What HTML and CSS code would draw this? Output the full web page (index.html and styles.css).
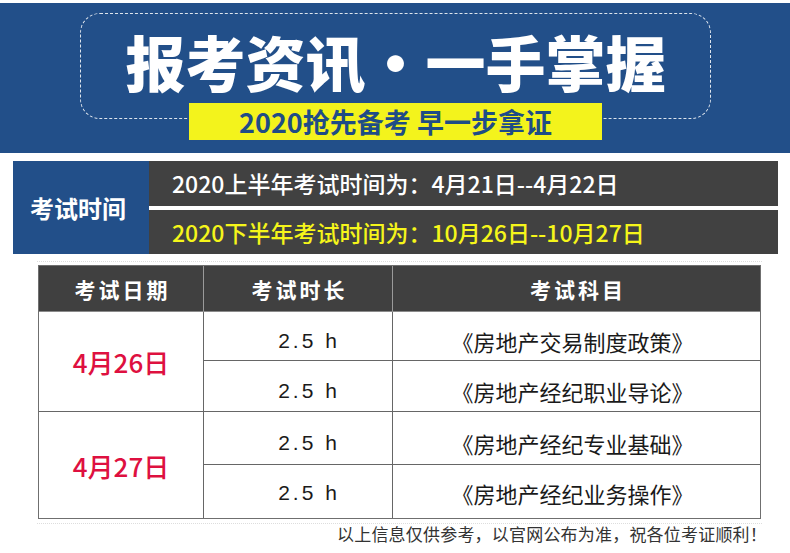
FILE: index.html
```html
<!DOCTYPE html>
<html lang="zh-CN">
<head>
<meta charset="utf-8">
<title>报考资讯</title>
<link rel="stylesheet" href="styles.css">
</head>
<body>
<div class="page">
  <header class="banner">
    <div class="frame">
      <h1 class="title">报考资讯<span class="dot">·</span>一手掌握</h1>
    </div>
    <div class="tag">2020抢先备考 早一步拿证</div>
  </header>

  <section class="times">
    <div class="times-label">考试时间</div>
    <div class="times-rows">
      <div class="times-row first">2020上半年考试时间为：4月21日--4月22日</div>
      <div class="times-row second">2020下半年考试时间为：10月26日--10月27日</div>
    </div>
  </section>

  <div class="table-wrap">
    <div class="grid">
      <div class="th">考试日期</div>
      <div class="th">考试时长</div>
      <div class="th last">考试科目</div>

      <div class="date r1">4月26日</div>
      <div class="td dur r1a">2.5 h</div>
      <div class="td subj r1a">《房地产交易制度政策》</div>
      <div class="td dur r1b">2.5 h</div>
      <div class="td subj r1b">《房地产经纪职业导论》</div>

      <div class="date r2">4月27日</div>
      <div class="td dur r2a">2.5 h</div>
      <div class="td subj r2a">《房地产经纪专业基础》</div>
      <div class="td dur r2b end">2.5 h</div>
      <div class="td subj r2b end">《房地产经纪业务操作》</div>
    </div>
  </div>

  <p class="note">以上信息仅供参考，以官网公布为准，祝各位考证顺利！</p>
</div>
</body>
</html>
```

FILE: styles.css
```css
* { box-sizing: border-box; }
html, body { margin: 0; padding: 0; background: #ffffff; }
body {
  width: 790px;
  height: 553px;
  overflow: hidden;
  font-family: "Noto Sans CJK SC", "Noto Sans", sans-serif;
}
.page { padding-top: 3px; }

/* banner */
.banner {
  height: 150px;
  background: #224f89;
  padding-top: 10px;
}
.frame {
  margin-left: 80px;
  width: 631px;
  height: 106px;
  border: 1px dashed rgba(255, 255, 255, 0.85);
  border-radius: 20px;
  padding-top: 17px;
}
.title {
  margin: 0;
  text-align: center;
  color: #ffffff;
  font-size: 60px;
  line-height: 60px;
  font-weight: 900;
  white-space: nowrap;
}
.dot {
  display: inline-block;
  width: 60px;
  text-align: center;
}
.tag {
  margin-top: -16px;
  margin-left: 189px;
  width: 413px;
  height: 37px;
  background: #f3f31c;
  color: #1f4c86;
  font-size: 27px;
  font-weight: 700;
  line-height: 37px;
  text-align: center;
  white-space: nowrap;
}

/* exam times */
.times {
  display: flex;
  margin: 8px 0 0 13px;
  width: 765px;
  height: 93px;
}
.times-label {
  width: 136px;
  background: #224f89;
  color: #ffffff;
  font-size: 24px;
  font-weight: 700;
  display: flex;
  align-items: center;
  justify-content: center;
  padding-right: 6px;
}
.times-rows {
  flex: 1;
  display: flex;
  flex-direction: column;
  gap: 4px;
}
.times-row {
  flex: 1;
  background: #414141;
  padding-left: 23px;
  font-size: 23px;
  font-weight: 500;
  display: flex;
  align-items: center;
  white-space: nowrap;
}
.times-row.first { color: #ffffff; }
.times-row.second { color: #f5f51a; }

/* table */
.table-wrap {
  margin: 7px 0 0 37px;
  width: 725px;
  border-top: 1px dotted #dddddd;
  border-bottom: 1px dotted #dddddd;
  padding: 3px 1px 4px 1px;
}
.grid {
  display: grid;
  grid-template-columns: 165px 189px 1fr;
  grid-template-rows: 46px 49px 51px 53px 53px;
  border: 1px solid #6f6f6f;
}
.th {
  background: #404040;
  color: #ffffff;
  font-size: 21px;
  font-weight: 700;
  letter-spacing: 3px;
  padding-left: 3px;
  display: flex;
  align-items: center;
  justify-content: center;
  border-right: 1px solid #9a9a9a;
  border-bottom: 1px solid #8a8a8a;
}
.th.last { border-right: none; }
.date {
  grid-column: 1;
  color: #de1040;
  font-size: 26px;
  font-weight: 500;
  display: flex;
  align-items: center;
  justify-content: center;
  border-right: 1px solid #666666;
}
.date.r1 { grid-row: 2 / 4; border-bottom: 1px solid #666666; }
.date.r2 { grid-row: 4 / 6; }
.td {
  display: flex;
  align-items: center;
  justify-content: center;
  padding-top: 9px;
  color: #1a1a1a;
  border-bottom: 1px solid #666666;
}
.td.end { border-bottom: none; padding-top: 3px; }
.dur {
  grid-column: 2;
  font-family: "Liberation Sans", Arial, sans-serif;
  font-size: 21px;
  letter-spacing: 3px;
  padding-left: 22px;
  border-right: 1px solid #666666;
}
.subj {
  grid-column: 3;
  font-size: 22px;
  padding-right: 8px;
}
.r1a { grid-row: 2; }
.r1b { grid-row: 3; }
.r2a { grid-row: 4; }
.r2b { grid-row: 5; }

/* note */
.note {
  margin: 0;
  padding-right: 23px;
  text-align: right;
  color: #333333;
  font-size: 17px;
  letter-spacing: 0.2px;
  line-height: 20px;
  white-space: nowrap;
}
```
